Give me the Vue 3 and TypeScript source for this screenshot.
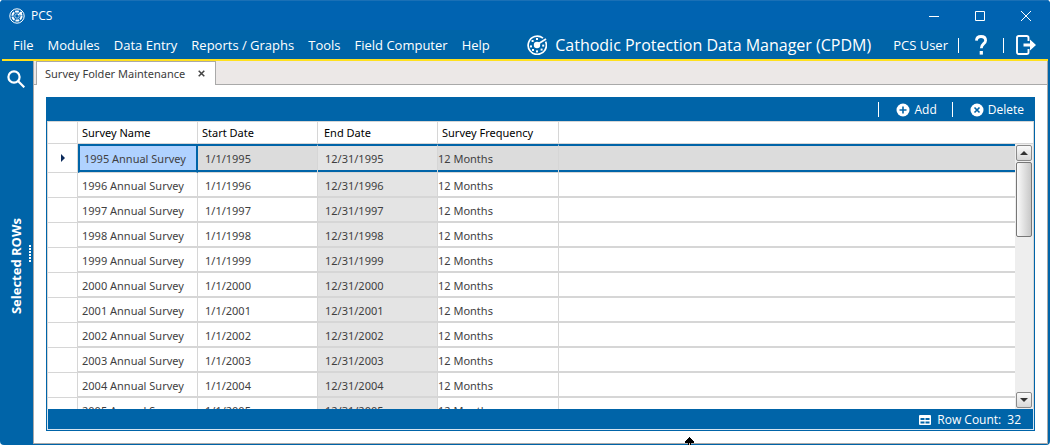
<script setup lang="ts">
const menus: string[] = ['File', 'Modules', 'Data Entry', 'Reports / Graphs', 'Tools', 'Field Computer', 'Help']
const columns: string[] = ['Survey Name', 'Start Date', 'End Date', 'Survey Frequency']

interface Survey {
  name: string
  start: string
  end: string
  frequency: string
}

const surveys: Survey[] = Array.from({ length: 11 }, (_, i) => {
  const year = 1995 + i
  return { name: `${year} Annual Survey`, start: `1/1/${year}`, end: `12/31/${year}`, frequency: '12 Months' }
})
const rowCount = 32
</script>

<template>
  <div class="window">
    <header class="titlebar">
      <svg class="app-icon" viewBox="0 0 16 16">
        <circle cx="8" cy="8" r="7.2" fill="none" stroke="#fff" stroke-width="1" />
        <circle cx="8" cy="8" r="4.6" fill="none" stroke="#fff" stroke-width="2" stroke-dasharray="3.8 1" />
        <circle cx="8" cy="8" r="2.2" fill="none" stroke="#fff" stroke-width=".6" />
        <path d="M9 7l4-3" stroke="#fff" stroke-width="1.4" />
      </svg>
      <span class="app-name">PCS</span>
      <div class="win-buttons">
        <button aria-label="Minimize"><svg viewBox="0 0 12 12"><path d="M1 6.5h10" /></svg></button>
        <button aria-label="Maximize"><svg viewBox="0 0 12 12"><path d="M1.5 1.5h9v9h-9z" /></svg></button>
        <button aria-label="Close"><svg viewBox="0 0 12 12"><path d="M1 1l10 10M11 1L1 11" /></svg></button>
      </div>
    </header>

    <nav class="menubar">
      <button v-for="m in menus" :key="m" class="menu">{{ m }}</button>
      <div class="product">
        <svg viewBox="0 0 20 20">
          <path d="M18.600 6.600A9.100 9.100 0 1 1 16 3.200" fill="none" stroke="#fff" stroke-width="1.7" />
          <path d="M11 9l8-5" stroke="#fff" stroke-width="1.8" />
          <circle cx="10" cy="10" r="3.2" fill="#fff" />
          <g fill="#fff">
            <rect x="9" y="3" width="2" height="2" /><rect x="9" y="15.4" width="2" height="2" />
            <rect x="4.6" y="5" width="2" height="2" /><rect x="3" y="10.4" width="2" height="2" />
            <rect x="5" y="14" width="2" height="2" /><rect x="13.6" y="13.6" width="2" height="2" />
            <rect x="15.2" y="9.6" width="2" height="2" />
          </g>
        </svg>
        <span>Cathodic Protection Data Manager (CPDM)</span>
      </div>
      <div class="user">
        <span>PCS User</span>
        <i class="sep"></i>
        <button aria-label="Help topics">
          <svg class="help" viewBox="0 0 12 20">
            <path d="M1.400 5.600C1.600 3 3.400 1.500 6 1.500c2.800 0 4.600 1.400 4.600 3.900C10.600 8.600 6.300 8.800 6.300 13.200" fill="none" stroke="#fff" stroke-width="2.8" />
            <rect x="4.7" y="16" width="3.2" height="3.6" fill="#fff" />
          </svg>
        </button>
        <i class="sep"></i>
        <button aria-label="Log out">
          <svg class="exit" viewBox="0 0 20 20">
            <path d="M12.500 6V2.800Q12.500 1 10.700 1H2.800Q1 1 1 2.800v14.400Q1 19 2.800 19h7.900q1.800 0 1.800-1.800V14" fill="none" stroke="#fff" stroke-width="1.9" />
            <path d="M7.500 8.600H14V4.600L20 10l-6 5.400v-4H7.500z" fill="#fff" />
          </svg>
        </button>
      </div>
    </nav>

    <div class="body">
      <aside class="sidebar">
        <button aria-label="Search">
          <svg viewBox="0 0 18 18"><circle cx="7" cy="7" r="5.6" /><path d="M11 11l6.300 6.300" /></svg>
        </button>
        <div class="side-label">Selected ROWs</div>
        <div class="grip"><i v-for="n in 6" :key="n"></i></div>
      </aside>

      <main class="content">
        <div class="tabs">
          <div class="tab">
            <span>Survey Folder Maintenance</span>
            <button aria-label="Close tab"><svg viewBox="0 0 7 7"><path d="M.7.7l5.600 5.600M6.300.7L.7 6.300" /></svg></button>
          </div>
          <div class="tab-rest"></div>
        </div>

        <section class="panel">
          <div class="toolbar">
            <i class="sep"></i>
            <button>
              <svg viewBox="0 0 14 14"><circle cx="7" cy="7" r="6.5" /><path d="M7 3.500v7M3.500 7h7" /></svg>Add
            </button>
            <i class="sep"></i>
            <button>
              <svg viewBox="0 0 14 14"><circle cx="7" cy="7" r="6.5" /><path d="M4.500 4.500l5 5M9.500 4.500l-5 5" /></svg>Delete
            </button>
          </div>

          <div class="grid">
            <table>
              <colgroup>
                <col class="c-mark" /><col class="c-data" /><col class="c-data" /><col class="c-data" /><col class="c-freq" /><col />
              </colgroup>
              <thead>
                <tr>
                  <th></th>
                  <th v-for="c in columns" :key="c" scope="col">{{ c }}</th>
                  <th></th>
                </tr>
              </thead>
              <tbody>
                <tr v-for="(s, i) in surveys" :key="s.name" :class="{ selected: i === 0 }">
                  <td class="mark"><svg v-if="i === 0" viewBox="0 0 4 8"><path d="M0 0l4 4-4 4z" /></svg></td>
                  <td class="name">{{ s.name }}</td>
                  <td class="start">{{ s.start }}</td>
                  <td class="end">{{ s.end }}</td>
                  <td class="freq">{{ s.frequency }}</td>
                  <td class="rest"></td>
                </tr>
              </tbody>
            </table>
            <div class="scrollbar">
              <button aria-label="Scroll up"><svg viewBox="0 0 8 4"><path d="M0 4l4-4 4 4z" /></svg></button>
              <div class="thumb"></div>
              <div class="track"></div>
              <button aria-label="Scroll down"><svg viewBox="0 0 8 4"><path d="M0 0l4 4 4-4z" /></svg></button>
            </div>
          </div>

          <footer class="status">
            <svg viewBox="0 0 12 10">
              <rect width="12" height="10" rx="1" fill="#fff" />
              <path d="M1.500 3h4v2h-4zM6.500 3h4v2h-4zM1.500 6.500h4v2h-4zM6.500 6.500h4v2h-4z" fill="#0064a8" />
            </svg>
            <span>Row Count:</span><span>{{ rowCount }}</span>
          </footer>
        </section>
      </main>
    </div>

    <svg class="pointer" viewBox="0 0 9 8">
      <path d="M4 0h1v1h1v1h1v1h1v1h1v2H6v2H3V6H0V4h1V3h1V2h1V1h1z" />
      <path d="M4 6h1v2H4z" fill="#d9c3b0" />
    </svg>
  </div>
</template>

<style>
body { margin: 0; background: #fff; }
</style>

<style scoped>
* { box-sizing: border-box; }
.window {
  position: relative;
  display: flex;
  flex-direction: column;
  height: 100vh;
  padding: 0 2px 1px 0;
  overflow: hidden;
  border-radius: 4px;
  background: #0064a8;
  color: #fff;
  font: 12px/16px "Open Sans", "Noto Sans", sans-serif;
}
button {
  display: flex;
  align-items: center;
  padding: 0;
  border: 0;
  background: none;
  color: inherit;
  font: inherit;
}
svg { display: block; flex: none; }
.titlebar {
  display: flex;
  align-items: center;
  height: 30px;
  margin-right: -2px;
  padding-left: 9px;
  border-top: 1px solid #1a70b6;
  background: #0063b1;
}
.app-icon { width: 16px; height: 16px; }
.app-name { margin-left: 6px; }
.win-buttons { display: flex; margin-left: auto; padding-right: 1px; }
.win-buttons button { width: 46px; height: 29px; justify-content: center; }
.win-buttons svg { width: 12px; height: 12px; fill: none; stroke: #fff; stroke-width: 1; }
.menubar {
  display: flex;
  align-items: center;
  height: 31px;
  margin-left: 2px;
  padding: 1px 12px 0 11px;
  border-bottom: 2px solid #ffe01e;
  font-size: 13px;
  line-height: 20px;
  white-space: nowrap;
}
.menu { margin-right: 14px; }
.product { display: flex; align-items: center; gap: 8px; margin-left: auto; font-size: 16px; }
.product svg { width: 20px; height: 20px; }
.user { display: flex; align-items: center; margin-left: 22px; }
.sep { width: 1px; height: 15px; background: #fff; }
.user .sep { margin-left: 10px; }
.help { width: 12px; height: 20px; margin: 0 6px 0 16px; }
.exit { width: 20px; height: 20px; margin-left: 12px; }
.body { display: flex; flex: 1; min-height: 0; }
.sidebar {
  position: relative;
  display: flex;
  flex-direction: column;
  align-items: center;
  width: 33px;
  flex: none;
  padding-right: 1px;
}
.sidebar svg { width: 18px; height: 18px; margin-top: 9px; fill: none; stroke: #fff; stroke-width: 2.2; }
.side-label {
  margin: auto 0;
  writing-mode: vertical-rl;
  transform: rotate(180deg);
  font-size: 13px;
  font-weight: 700;
}
.grip {
  position: absolute;
  right: 2px;
  top: 48%;
  display: grid;
  gap: 1px;
}
.grip i { width: 2px; height: 2px; background: #fff; }
.content {
  display: flex;
  flex-direction: column;
  flex: 1;
  min-width: 0;
  border: 1px solid #a9a9a9;
  border-top: 0;
  background: #fff;
}
.tabs { display: flex; height: 24px; padding-left: 2px; background: linear-gradient(#a9a9a9, #a9a9a9) 0 100% / 3px 1px no-repeat #ece8e7; }
.tab {
  display: flex;
  align-items: center;
  gap: 13px;
  padding: 0 10px 0 8px;
  border: 1px solid #a9a9a9;
  border-bottom: 0;
  background: #fff;
  color: #3c3c3c;
  font-family: "Noto Sans", "Open Sans", sans-serif;
  font-size: 11px;
}
.tab svg { width: 7px; height: 7px; stroke: #444; stroke-width: 1.5; }
.tab-rest { flex: 1; border-bottom: 1px solid #a9a9a9; }
.panel {
  display: flex;
  flex-direction: column;
  flex: 1;
  min-height: 0;
  margin: 12px;
  padding: 0 1px 1px;
  background: #0064a8;
}
.toolbar { display: flex; align-items: center; justify-content: flex-end; height: 24px; padding: 1px 10px 0 0; }
.toolbar button { gap: 4px; margin-left: 17px; }
.toolbar button + .sep { margin-left: 15px; }
.toolbar svg { width: 14px; height: 14px; fill: #fff; stroke: #0064a8; stroke-width: 1.6; }
.toolbar circle { stroke: none; }
.grid {
  position: relative;
  flex: 1;
  min-height: 0;
  overflow: hidden;
  border: 1px solid #d6d6d6;
  border-bottom: 0;
  background: #fff;
  font-family: "Noto Sans", "Open Sans", sans-serif;
  font-size: 11px;
}
table { width: 100%; table-layout: fixed; border-collapse: separate; border-spacing: 0; }
.c-mark { width: 30px; }
.c-data { width: 120px; }
.c-freq { width: 121px; }
th, td {
  padding: 0;
  border-right: 1px solid #d6d6d6;
  overflow: hidden;
  text-align: left;
  white-space: nowrap;
}
th {
  height: 22px;
  padding-left: 4px;
  border-bottom: 1px solid #d6d6d6;
  color: #000;
  font-weight: 400;
}
th:nth-child(4) { padding-left: 6px; }
td { height: 25px; padding-top: 2px; border-bottom: 2px solid #d6d6d6; color: #3f3f3f; }
th:last-child, td.rest { border-right: 0; }
td.mark { padding-top: 0; border-bottom-width: 1px; }
td.mark svg { width: 4px; height: 8px; margin-left: 13px; fill: #0b2a5b; }
td.name { padding-left: 4px; }
td.start, td.end { padding-left: 7px; }
td.end { background: #e4e4e4; }
.selected td:not(.mark) {
  height: 29px;
  padding-top: 0;
  border-top: 2px solid #0064a8;
  background: #dcdcdc;
  box-shadow: inset 0 -2px #0064a8;
  border-bottom-width: 1px;
}
.selected td.end { background: #e4e4e4; }
.selected td.name {
  border-left: 2px solid #0064a8;
  border-right: 2px solid #0064a8;
  background: #b0d2ff;
}
.scrollbar {
  position: absolute;
  top: 22px;
  right: 0;
  bottom: 0;
  display: flex;
  flex-direction: column;
  width: 18px;
  padding: 1px;
  background: #eee;
}
.scrollbar button {
  justify-content: center;
  height: 16px;
  flex: none;
  border: 1px solid #8a8a8a;
  border-radius: 2px;
  background: linear-gradient(#fafafa, #d8d8d8);
}
.scrollbar svg { width: 8px; height: 4px; fill: #333; }
.thumb {
  height: 75px;
  margin-top: 1px;
  border: 1px solid #777;
  border-radius: 2px;
  background: linear-gradient(90deg, #fafafa, #c8c8c8);
}
.track { flex: 1; }
.status {
  display: flex;
  align-items: center;
  justify-content: flex-end;
  gap: 6px;
  height: 21px;
  padding: 1px 12px 0 0;
  border: 1px solid #d6e4f0;
  border-top: 0;
}
.status svg { width: 12px; height: 10px; }
.pointer { position: absolute; left: 685px; bottom: 0; width: 9px; height: 8px; }
</style>
